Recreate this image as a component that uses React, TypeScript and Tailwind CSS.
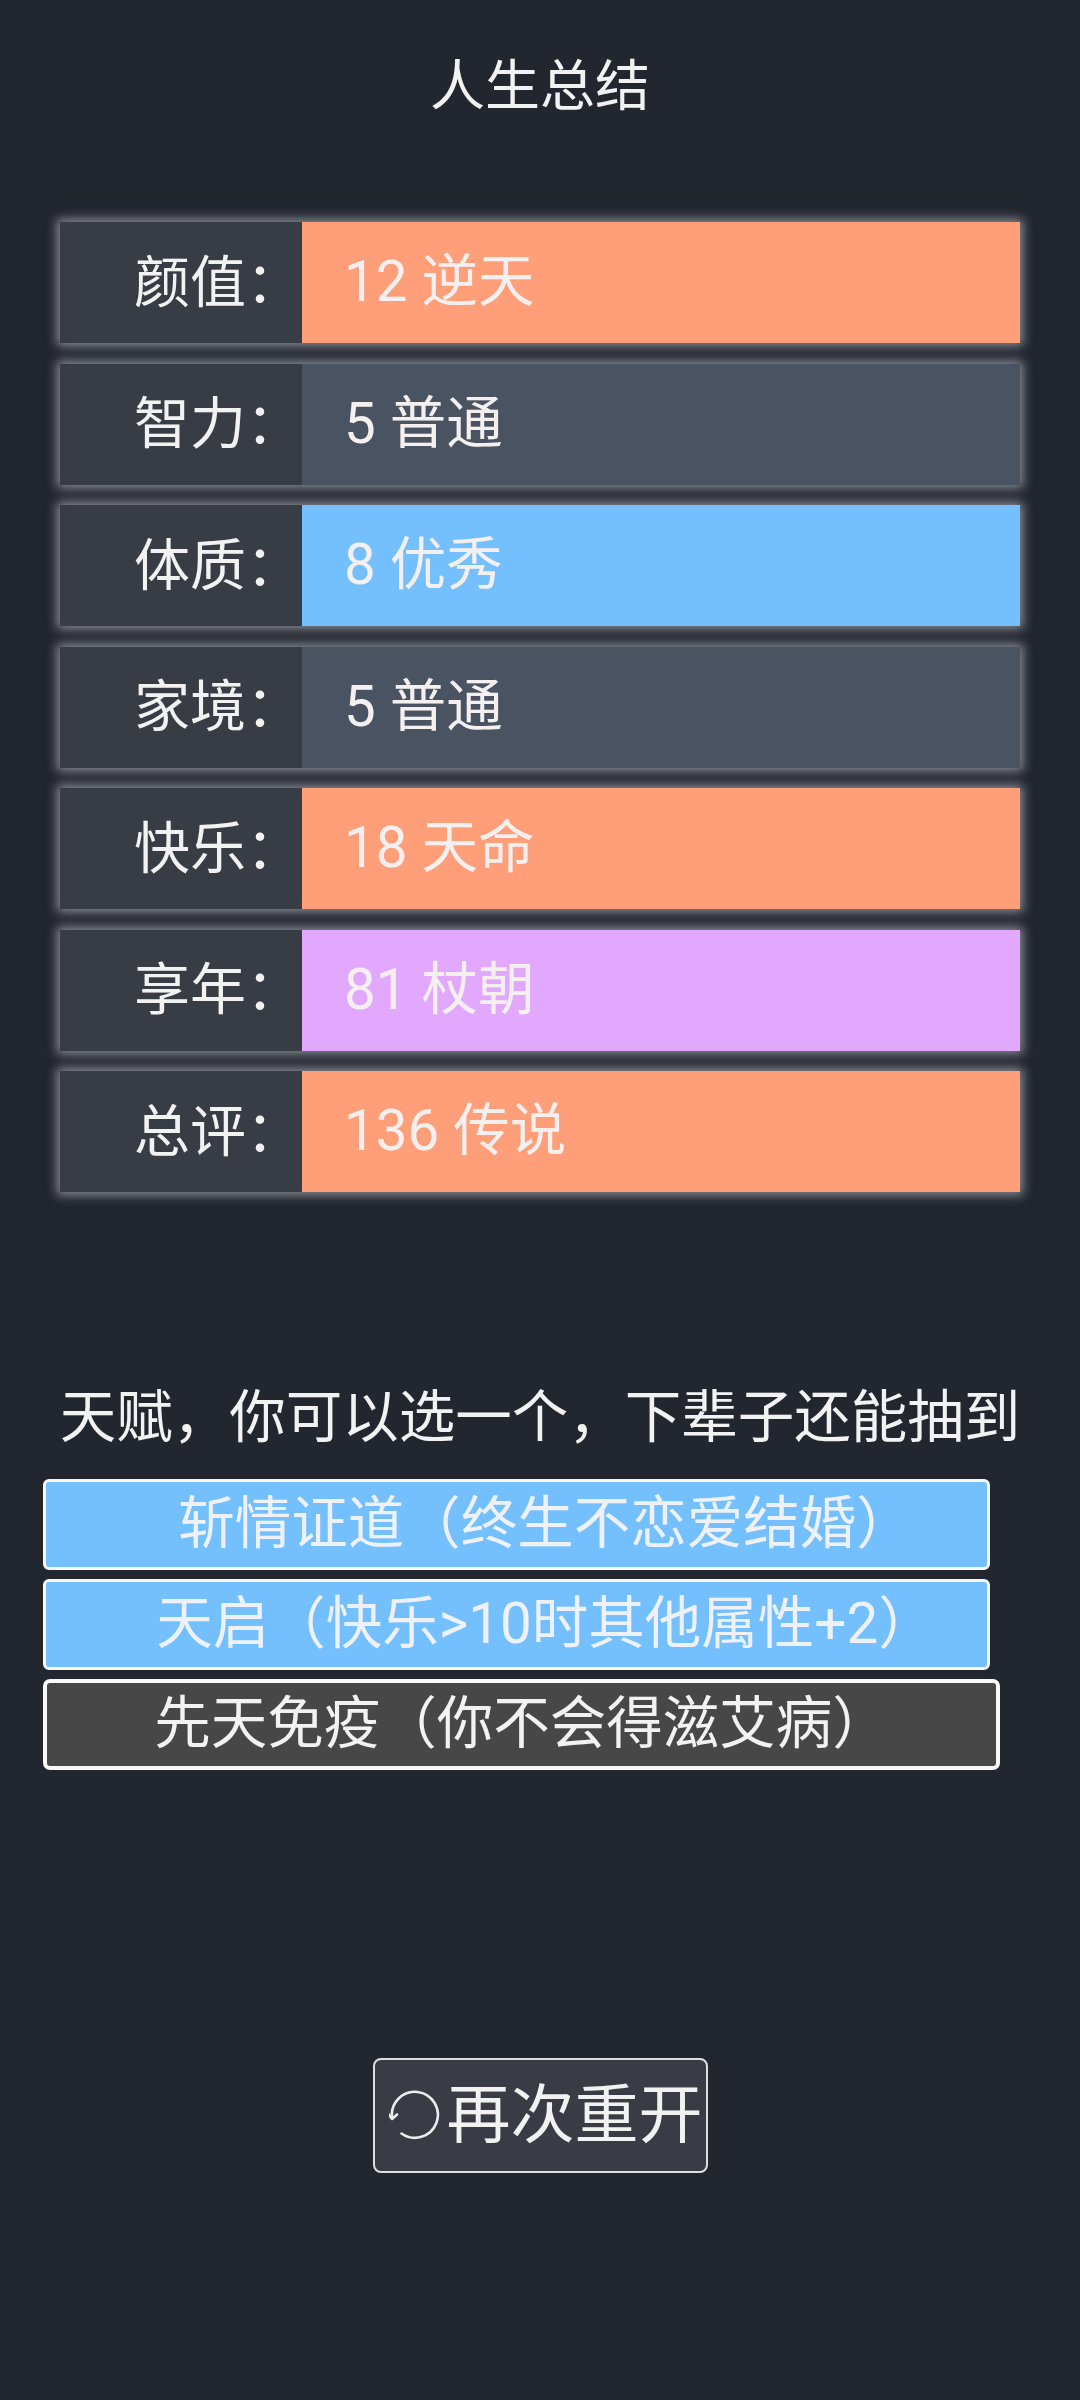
import React from "react";

type Row = { label: string; value: string; color: string };

const rows: Row[] = [
  { label: "颜值：", value: "12 逆天", color: "bg-[#ff9f7a]" },
  { label: "智力：", value: "5 普通", color: "bg-[#4a5361]" },
  { label: "体质：", value: "8 优秀", color: "bg-[#74bffe]" },
  { label: "家境：", value: "5 普通", color: "bg-[#4a5361]" },
  { label: "快乐：", value: "18 天命", color: "bg-[#ff9f7a]" },
  { label: "享年：", value: "81 杖朝", color: "bg-[#e2a8fe]" },
  { label: "总评：", value: "136 传说", color: "bg-[#ff9f7a]" },
];

const talents = [
  { text: "斩情证道（终生不恋爱结婚）", picked: true },
  { text: "天启（快乐>10时其他属性+2）", picked: true },
  { text: "先天免疫（你不会得滋艾病）", picked: false },
];

function RestartIcon() {
  return (
    <svg width="52" height="52" viewBox="0 0 52 52" fill="none" stroke="#ececec" strokeWidth="2.6" strokeLinecap="round" strokeLinejoin="round">
      <path d="M12.5 43.5 A23 23 0 1 0 3.1 28" />
      <path d="M-1 23.5 L3.1 29 L8 24.5" />
    </svg>
  );
}

export default function App() {
  return (
    <div className="min-h-[2400px] w-full bg-[#22262f] text-[#f2f2f2] font-[Roboto,'Noto_Sans_CJK_SC',sans-serif] overflow-hidden">
      <h1 className="pt-[48px] text-center text-[55px] leading-[76px] font-normal">人生总结</h1>

      {/* 属性 */}
      <div className="mt-[98px] mx-auto w-[960px] flex flex-col gap-[20.5px]">
        {rows.map((r) => (
          <div key={r.label} className="flex h-[121px] shadow-[0_0_10px_3px_rgba(205,208,215,0.6)]">
            <div className="w-[242px] bg-[#383c45] flex items-center justify-end pr-0 text-[56px]">
              {r.label}
            </div>
            <div className={`flex-1 ${r.color} flex items-center pl-[42px] text-[56.5px] text-[#f5f0f0]`}>
              {r.value}
            </div>
          </div>
        ))}
      </div>

      <div className="mt-[188px] text-center text-[56.5px] leading-[76px]">天赋，你可以选一个，下辈子还能抽到</div>

      {/* 天赋 */}
      <div className="mt-[23px] pl-[43px] flex flex-col items-start gap-[9px]">
        {talents.map((t) =>
          t.picked ? (
            <div key={t.text} className="w-[947px] h-[91px] rounded-[6px] border-[3px] border-[#f7f7f7] bg-[#74bffe] flex items-center justify-center pl-[58px] text-[56.5px] text-[#eef2f8]">
              {t.text}
            </div>
          ) : (
            <div key={t.text} className="w-[957px] h-[91px] rounded-[7px] border-4 border-[#f9f9f9] bg-[#474747] flex items-center justify-center text-[56.5px] text-[#f2f2f2]">
              {t.text}
            </div>
          )
        )}
      </div>

      <div className="mt-[288px] flex justify-center">
        <button className="w-[335px] h-[115px] rounded-[8px] border-2 border-[#dedede] bg-[#393c45] flex items-center gap-[6px] pl-[14px] text-[64px] text-[#f2f2f2] overflow-visible">
          <span className="flex overflow-visible">
            <RestartIcon />
          </span>
          <span>再次重开</span>
        </button>
      </div>
    </div>
  );
}
